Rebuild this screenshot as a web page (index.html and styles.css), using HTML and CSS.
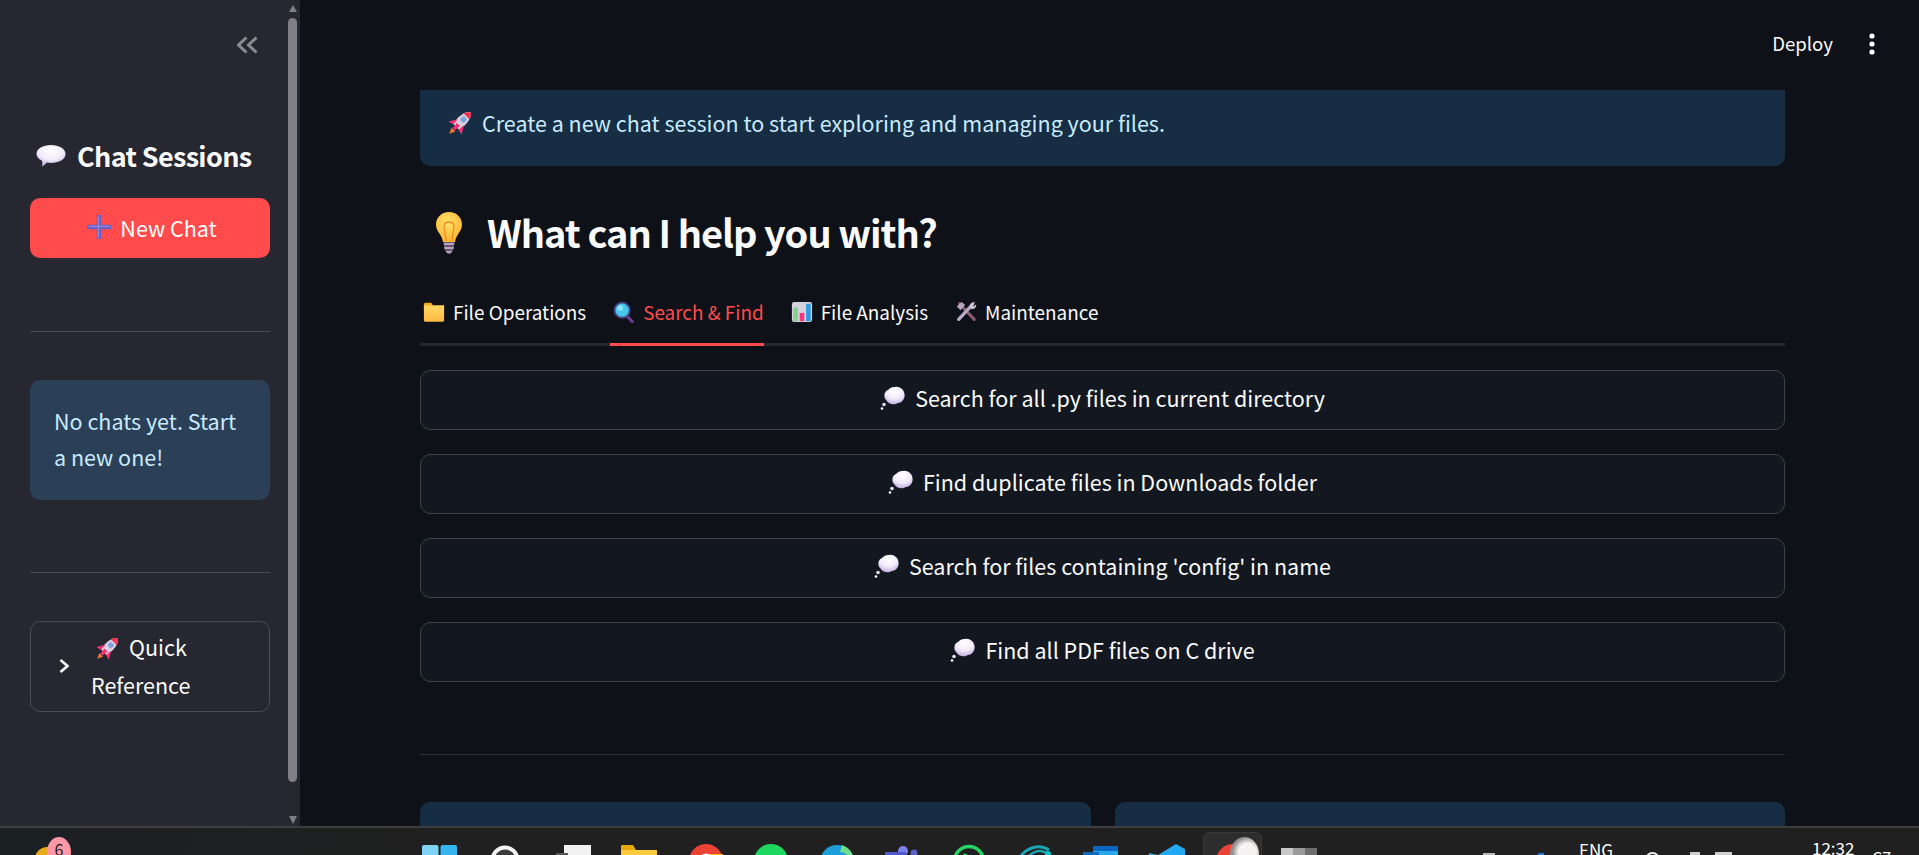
FILE: index.html
```html
<!DOCTYPE html>
<html lang="en">
<head>
  <meta charset="UTF-8" />
  <meta name="viewport" content="width=device-width, initial-scale=1.0"/>
  <title>Chat Sessions</title>
  <link rel="stylesheet" href="styles.css">
</head>
<body>
  <!-- shared emoji drawings -->
  <svg class="sprite" width="0" height="0" aria-hidden="true">
    <defs>
      <radialGradient id="cloud" cx="50%" cy="25%" r="80%">
        <stop offset="0" stop-color="#ffffff"/>
        <stop offset="0.55" stop-color="#f1ebf9"/>
        <stop offset="1" stop-color="#b9a4dc"/>
      </radialGradient>
      <radialGradient id="glass" cx="45%" cy="35%" r="70%">
        <stop offset="0" stop-color="#ffe36a"/>
        <stop offset="1" stop-color="#ffb02e"/>
      </radialGradient>
      <linearGradient id="folderBody" x1="0" y1="0" x2="0" y2="1">
        <stop offset="0" stop-color="#ffd766"/>
        <stop offset="1" stop-color="#ffb93e"/>
      </linearGradient>
      <symbol id="i-rocket" viewBox="0 0 24 24">
        <g transform="rotate(45 12 12)">
          <path d="M12 -2C16.500 1 17.500 8 16 17H8C6.500 8 7.500 1 12 -2Z" fill="#dcd0dc"/>
          <path d="M12 -2C13.800 -.6 15.200 1.200 16 3.400H8C8.800 1.200 10.200 -.6 12 -2Z" fill="#f8314f"/>
          <path d="M8 11L3.500 18.500L8.600 17.500ZM16 11L20.500 18.500L15.400 17.500ZM10 14H14L13.500 20H10.500Z" fill="#f92f77"/>
          <path d="M9.500 20.500H14.500L12 26Z" fill="#f0792e"/>
          <circle cx="12" cy="7.500" r="2.500" fill="#6ea6e8" stroke="#9aa6cf" stroke-width=".8"/>
        </g>
      </symbol>
      <symbol id="i-thought" viewBox="0 0 26 24">
        <path d="M15 1C19 0 24 3 24.500 8C25.500 12 22 17 18 17C14 19.500 8 18 6.500 14.500C3 12 4 5 8 4C10 1.500 13 .5 15 1Z" fill="url(#cloud)"/>
        <circle cx="4" cy="18.500" r="1.800" fill="#e8e0f4"/>
        <circle cx="2" cy="22.500" r="1.300" fill="#fff"/>
      </symbol>
      <symbol id="i-speech" viewBox="0 0 30 24">
        <path d="M15 1C23 1 29.500 4.600 29.500 10C29.500 15.400 23 19 15 19C13.500 19 12 18.900 10.600 18.600C9.500 20.400 7.500 22 6 22.400C6.400 20.800 6.400 18.600 6 16.800C2.800 15.200 .5 12.800 .5 10C.5 4.600 7 1 15 1Z" fill="url(#cloud)"/>
      </symbol>
      <symbol id="i-plus" viewBox="0 0 24 24">
        <path d="M12 1V23M1 12H23" stroke="#6a5fc4" stroke-width="4.400" stroke-linecap="round" fill="none"/>
        <path d="M11.400 2V22M2 11.400H22" stroke="#8f86e0" stroke-width="1.400" stroke-linecap="round" fill="none"/>
      </symbol>
      <symbol id="i-bulb" viewBox="0 0 28 44">
        <path d="M14 1C21.500 1 27 6.500 27 13.500C27 20.500 21 23.500 20 31H8C7 23.500 1 20.500 1 13.500C1 6.500 6.500 1 14 1Z" fill="url(#glass)"/>
        <path d="M11 30C10.500 22 9 19 9 15.500C9 12.500 11 11 14 11C17 11 19 12.500 19 15.500C19 19 17.500 22 17 30" fill="none" stroke="#f08a26" stroke-width="1.300"/>
        <path d="M8.500 31.500H19.500L19 34.500L9 34.500ZM9 35.500H19L18.500 38.500H9.500ZM10 39.500H18L15.500 42.500H12.500Z" fill="#b8a0c0"/>
      </symbol>
      <symbol id="i-folder" viewBox="0 0 24 24">
        <path d="M1 4C1 2.800 1.800 2 3 2H9L11 5H23V9H1Z" fill="#f6a821"/>
        <path d="M1 5H23V21C23 22 22.200 22.700 21.200 22.700H2.800C1.800 22.700 1 22 1 21Z" fill="url(#folderBody)"/>
      </symbol>
      <symbol id="i-search" viewBox="0 0 24 24">
        <path d="M14 15L21 22.500" stroke="#6a3d8f" stroke-width="3.400" stroke-linecap="round"/>
        <circle cx="10" cy="10" r="8.300" fill="#45c6ec" stroke="#4a3f7f" stroke-width="2"/>
        <circle cx="8" cy="7.500" r="3" fill="#8be2f7"/>
      </symbol>
      <symbol id="i-chart" viewBox="0 0 24 24">
        <rect x="1" y="1" width="22" height="22" rx="2.500" fill="#d4d2dc"/>
        <rect x="2.500" y="7" width="5" height="15" fill="#86d08f"/>
        <rect x="9.500" y="13" width="5" height="9" fill="#f8377f"/>
        <rect x="16.500" y="3" width="5" height="19" fill="#2f9ae6"/>
      </symbol>
      <symbol id="i-tools" viewBox="0 0 24 24">
        <path d="M5 3L21 20" stroke="#8a5a6a" stroke-width="3.400" stroke-linecap="round"/>
        <path d="M2 6L7 1L11 4L6 10Z" fill="#b7a6c4"/>
        <path d="M19 4L4 20" stroke="#b9aac8" stroke-width="3.600" stroke-linecap="round"/>
        <path d="M16 6C16 2.500 19 .500 22 1.500L19 4.500L20.500 6L23 3.500C23.800 7 20.500 9.500 17.500 8.500Z" fill="#cfc4da"/>
      </symbol>
    </defs>
  </svg>

  <div class="app">
    <div class="workspace">
      <aside class="sidebar">
        <div class="sidebar-content">
          <div class="collapse-row">
            <svg class="collapse-icon" viewBox="0 0 21 18"><path d="M9.500 1.500L1.500 9L9.500 16.500M19.500 1.500L11.500 9L19.500 16.500" fill="none" stroke="#8a8b90" stroke-width="3"/></svg>
          </div>
          <h3 class="sidebar-title"><svg class="emoji emoji-speech"><use href="#i-speech"/></svg>Chat Sessions</h3>
          <button class="btn-primary" type="button"><svg class="emoji emoji-plus"><use href="#i-plus"/></svg>New Chat</button>
          <hr class="side-rule rule-first">
          <div class="side-info">No chats yet. Start a new one!</div>
          <hr class="side-rule">
          <div class="expander">
            <svg class="chevron" viewBox="0 0 10 14"><path d="M1.500 1L8.500 7L1.500 13" fill="none" stroke="#fafafa" stroke-width="2.600"/></svg>
            <span class="expander-label"><svg class="emoji emoji-rocket-side"><use href="#i-rocket"/></svg>Quick Reference</span>
          </div>
        </div>
        <div class="side-scroll">
          <span class="arrow-up"></span>
          <span class="thumb"></span>
          <span class="arrow-down"></span>
        </div>
      </aside>

      <main class="main">
        <header class="topbar">
          <span class="deploy">Deploy</span>
          <svg class="dots" viewBox="0 0 6 22"><circle cx="3" cy="3" r="2.600"/><circle cx="3" cy="11" r="2.600"/><circle cx="3" cy="19" r="2.600"/></svg>
        </header>

        <div class="content">
          <div class="alert"><svg class="emoji emoji-rocket"><use href="#i-rocket"/></svg>Create a new chat session to start exploring and managing your files.</div>

          <h2 class="help-title"><svg class="emoji-bulb"><use href="#i-bulb"/></svg>What can I help you with?</h2>

          <div class="tabs">
            <div class="tab"><svg class="emoji"><use href="#i-folder"/></svg>File Operations</div>
            <div class="tab tab-active"><svg class="emoji"><use href="#i-search"/></svg>Search &amp; Find</div>
            <div class="tab"><svg class="emoji"><use href="#i-chart"/></svg>File Analysis</div>
            <div class="tab"><svg class="emoji"><use href="#i-tools"/></svg>Maintenance</div>
          </div>

          <div class="prompts">
            <button class="prompt" type="button"><svg class="emoji emoji-thought"><use href="#i-thought"/></svg>Search for all .py files in current directory</button>
            <button class="prompt" type="button"><svg class="emoji emoji-thought"><use href="#i-thought"/></svg>Find duplicate files in Downloads folder</button>
            <button class="prompt" type="button"><svg class="emoji emoji-thought"><use href="#i-thought"/></svg>Search for files containing 'config' in name</button>
            <button class="prompt" type="button"><svg class="emoji emoji-thought"><use href="#i-thought"/></svg>Find all PDF files on C drive</button>
          </div>

          <hr class="main-rule">

          <div class="stat-row">
            <div class="stat-card"></div>
            <div class="stat-card"></div>
          </div>
        </div>
      </main>
    </div>

    <footer class="taskbar">
      <div class="weather">
        <span class="sun"></span>
        <span class="badge">6</span>
      </div>
      <div class="task-icons">
        <svg class="task-icon" viewBox="0 0 35 35"><rect x="0" y="0" width="16.500" height="16.500" rx="2" fill="#7fd3f7"/><rect x="18.500" y="0" width="16.500" height="16.500" rx="2" fill="#36b4ee"/></svg>
        <svg class="task-icon" viewBox="0 0 35 35"><circle cx="17" cy="15" r="12.500" fill="#3a3a3a" stroke="#f4f4f4" stroke-width="4"/></svg>
        <svg class="task-icon" viewBox="0 0 35 35"><rect x="10" y="0" width="27" height="20" fill="#f2f2f2"/><rect x="2" y="8" width="12" height="4" fill="#555"/></svg>
        <svg class="task-icon" viewBox="0 0 35 35"><path d="M1 6V1.500C1 .500 1.500 0 2.500 0H13L16 5H37V30H1Z" fill="#e8a90f"/><rect x="1" y="5" width="36" height="25" fill="#fbcb3c"/></svg>
        <svg class="task-icon" viewBox="0 0 35 35"><circle cx="20" cy="16" r="17" fill="#ea4335"/><path d="M20 9H37V16H20Z" fill="#fbbc05"/><circle cx="20" cy="16" r="7.500" fill="#fff"/></svg>
        <svg class="task-icon" viewBox="0 0 35 35"><circle cx="19" cy="16" r="17" fill="#1ed760"/></svg>
        <svg class="task-icon" viewBox="0 0 35 35"><circle cx="19" cy="17" r="17" fill="#1c9fd8"/><path d="M24 0C32 3 36 9 36 17C32 11 28 8 22 7Z" fill="#6fe08a"/></svg>
        <svg class="task-icon" viewBox="0 0 35 35"><circle cx="19" cy="6" r="5" fill="#7b83eb"/><circle cx="30" cy="8" r="3.500" fill="#5b5fc7"/><rect x="1" y="7" width="21" height="20" fill="#5059c9"/></svg>
        <svg class="task-icon" viewBox="0 0 35 35"><circle cx="19" cy="16" r="14.500" fill="none" stroke="#25d366" stroke-width="3.500"/><circle cx="15" cy="11" r="2.500" fill="#25d366"/></svg>
        <svg class="task-icon" viewBox="0 0 35 35"><path d="M3 14C9 3 23 -2 33 5" fill="none" stroke="#1aa3b0" stroke-width="3"/><path d="M9 16C14 7 24 3 32 9" fill="none" stroke="#1aa3b0" stroke-width="2.500"/><circle cx="32" cy="9" r="3" fill="#12c0c9"/></svg>
        <svg class="task-icon" viewBox="0 0 35 35"><rect x="11" y="1" width="25" height="5" fill="#0a66c2"/><rect x="11" y="6" width="25" height="24" fill="#28a8ea"/><rect x="1" y="7" width="16" height="20" fill="#0f6cbd"/></svg>
        <svg class="task-icon" viewBox="0 0 35 35"><path d="M28 -1L37 4V30L28 35L10 15L1 20V8L10 10Z" fill="#23a9f2"/></svg>
        <div class="task-active">
          <span class="active-red"></span>
          <span class="active-white"></span>
        </div>
        <div class="task-last">
          <span class="last-a"></span><span class="last-b"></span><span class="last-c"></span>
        </div>
      </div>
      <div class="tray">
        <span class="tray-mark"></span>
        <span class="tray-dot"></span>
        <span class="tray-lang">ENG</span>
        <span class="tray-round"></span>
        <span class="tray-tick"></span>
        <span class="tray-tick tray-tick-wide"></span>
        <span class="tray-time">12:32</span>
        <span class="tray-bell">C7</span>
      </div>
    </footer>
  </div>
</body>
</html>
```

FILE: styles.css
```css
* {
  box-sizing: border-box;
}

html, body {
  margin: 0;
  height: 100%;
  overflow: hidden;
}

body {
  font-family: "Noto Sans CJK SC", "Noto Sans", sans-serif;
  background: #0e1117;
  color: #fafafa;
}

.sprite {
  position: absolute;
}

.app {
  height: 855px;
  display: flex;
  flex-direction: column;
}

.workspace {
  flex: 1;
  display: flex;
  min-height: 0;
}

/* Sidebar */
.sidebar {
  width: 300px;
  flex: none;
  background: #262730;
  display: flex;
}

.sidebar-content {
  width: 288px;
  padding: 36px 18px 0 30px;
}

.collapse-row {
  display: flex;
  justify-content: flex-end;
  padding-right: 12px;
}

.collapse-icon {
  width: 21px;
  height: 18px;
}

.sidebar-title {
  margin: 82px 0 0;
  height: 40px;
  padding: 0 0 2px 6px;
  display: flex;
  align-items: center;
  font-size: 27px;
  font-weight: 600;
  letter-spacing: -0.65px;
}

.emoji {
  width: 22px;
  height: 22px;
  flex: none;
}

.emoji-speech {
  width: 30px;
  height: 24px;
  margin: 2px 11px 0 0;
}

.btn-primary {
  width: 240px;
  height: 60px;
  margin-top: 22px;
  padding: 0 0 2px 4px;
  border: none;
  border-radius: 10px;
  background: #ff4b4b;
  color: #fff;
  font: inherit;
  font-size: 21.5px;
  display: flex;
  align-items: center;
  justify-content: center;
}

.emoji-plus {
  width: 24px;
  height: 24px;
  margin-right: 9px;
}

.side-rule {
  margin: 72px 0 48px;
  border: none;
  border-top: 1px solid #4a4b53;
}

.rule-first {
  margin-top: 73px;
}

.side-info {
  height: 120px;
  padding: 23px 24px;
  border-radius: 10px;
  background: #2b3f57;
  color: #c7ebff;
  font-size: 21.5px;
  line-height: 36px;
}

.expander {
  height: 91px;
  padding: 0 0 2px 28px;
  border: 1px solid #4a4b53;
  border-radius: 10px;
  display: flex;
  align-items: center;
}

.chevron {
  width: 10px;
  height: 14px;
  flex: none;
}

.expander-label {
  width: 130px;
  margin-left: 22px;
  font-size: 21.5px;
  line-height: 38px;
}

.emoji-rocket-side {
  width: 25px;
  height: 25px;
  margin: 0 9px 0 4px;
  vertical-align: -5px;
}

.side-scroll {
  width: 9px;
  margin-right: 3px;
  padding-top: 5px;
  display: flex;
  flex-direction: column;
  align-items: center;
}

.arrow-up {
  border: 4.5px solid transparent;
  border-top: none;
  border-bottom: 7px solid #7f7f85;
}

.thumb {
  width: 9px;
  height: 764px;
  margin-top: 6px;
  border-radius: 5px;
  background: #7f7f85;
}

.arrow-down {
  margin-top: 34px;
  border: 4.5px solid transparent;
  border-bottom: none;
  border-top: 8px solid #7f7f85;
}

/* Main area */
.main {
  flex: 1;
  min-width: 0;
  display: flex;
  flex-direction: column;
  overflow: hidden;
}

.topbar {
  height: 90px;
  flex: none;
  padding: 0 44px 2px 0;
  display: flex;
  align-items: center;
  justify-content: flex-end;
}

.deploy {
  font-size: 18.6px;
  margin: 0 36px 4px 0;
}

.dots {
  width: 6px;
  height: 22px;
  fill: #fafafa;
}

.content {
  padding: 0 134px 0 120px;
}

.alert {
  height: 76px;
  padding: 0 0 11px 27px;
  border-radius: 0 0 10px 10px;
  background: #172d43;
  color: #c7ebff;
  font-size: 21.5px;
  display: flex;
  align-items: center;
}

.emoji-rocket {
  width: 26px;
  height: 26px;
  margin-right: 9px;
}

.help-title {
  margin: 40px 0 0;
  height: 54px;
  padding: 0 0 3px 14px;
  display: flex;
  align-items: center;
  font-size: 38px;
  font-weight: 600;
  letter-spacing: -1px;
}

.emoji-bulb {
  width: 30px;
  height: 44px;
  margin: 3px 23px 0 0;
}

.tabs {
  margin-top: 32px;
  height: 54px;
  display: flex;
  gap: 24px;
  border-bottom: 3px solid #262730;
}

.tab {
  height: 54px;
  padding: 0 0 15px 3px;
  display: flex;
  align-items: center;
  gap: 8px;
  font-size: 18.9px;
}

.tab-active {
  color: #ff4b4b;
  border-bottom: 3px solid #ff4b4b;
  padding-bottom: 12px;
}

.prompts {
  margin-top: 24px;
  display: flex;
  flex-direction: column;
  gap: 24px;
}

.prompt {
  height: 60px;
  padding: 0 0 5px;
  border: 1px solid #3f4147;
  border-radius: 10px;
  background: #13171f;
  color: #fafafa;
  font: inherit;
  font-size: 21.5px;
  display: flex;
  align-items: center;
  justify-content: center;
}

.emoji-thought {
  width: 26px;
  height: 24px;
  margin-right: 9px;
}

.main-rule {
  margin: 72px 0 47px;
  border: none;
  border-top: 1px solid #31333a;
}

.stat-row {
  display: flex;
  gap: 24px;
}

.stat-card {
  flex: 1;
  height: 60px;
  border-radius: 10px;
  background: #172d43;
}

/* Taskbar, cut off by the bottom of the window */
.taskbar {
  height: 29px;
  flex: none;
  border-top: 2px solid #3e3e3e;
  background: #202020;
  display: flex;
  overflow: hidden;
}

.weather {
  width: 406.5px;
  flex: none;
  background: linear-gradient(90deg, #1b2023, #202020);
  position: relative;
}

.sun {
  position: absolute;
  left: 35px;
  top: 19px;
  width: 24px;
  height: 24px;
  border-radius: 50%;
  background: #e9ab1b;
}

.badge {
  position: absolute;
  left: 47px;
  top: 9px;
  width: 24px;
  height: 30px;
  border-radius: 50%;
  background: #ff97a8;
  color: #1b1b1b;
  font-size: 16px;
  line-height: 24px;
  text-align: center;
}

.task-icons {
  width: 924px;
  flex: none;
  display: flex;
  padding-top: 17px;
}

.task-icon {
  width: 35px;
  height: 35px;
  margin: 0 15.5px;
  flex: none;
  overflow: visible;
}

.task-active {
  width: 59px;
  height: 40px;
  margin: -13px 0 0 4.5px;
  border-radius: 6px;
  background: #2d2d2d;
  border: 1px solid #383838;
  position: relative;
  flex: none;
}

.active-red {
  position: absolute;
  left: 12px;
  top: 11px;
  width: 34px;
  height: 34px;
  border-radius: 50%;
  background: #ea4335;
}

.active-white {
  position: absolute;
  left: 26px;
  top: 4px;
  width: 29px;
  height: 34px;
  border-radius: 50%;
  background: radial-gradient(circle at 60% 45%, #f6f4f2 0 35%, #8c8a88 60%, #dcdad8 100%);
}

.task-last {
  display: flex;
  margin: 3px 0 0 19px;
}

.task-last span {
  width: 12px;
  height: 8px;
}

.last-a { background: #c8c8c8; }
.last-b { background: #9a9a9a; }
.last-c { background: #6e6e6e; }

.tray {
  flex: 1;
  display: flex;
  align-items: flex-start;
  color: #fff;
}

.tray span {
  flex: none;
}

.tray-mark {
  width: 12px;
  height: 3px;
  margin: 25px 0 0 152.5px;
  background: #b8b8b8;
}

.tray-dot {
  width: 6px;
  height: 3px;
  margin: 25px 0 0 43px;
  background: #1f78c8;
}

.tray-lang {
  width: 34px;
  margin: 12px 0 0 35px;
  font-size: 17px;
  line-height: 20px;
}

.tray-round {
  width: 15px;
  height: 15px;
  margin: 24px 0 0 32px;
  border-radius: 50%;
  border: 2px solid #eee;
}

.tray-tick {
  width: 10px;
  height: 3px;
  margin: 24px 0 0 30px;
  background: #cfcfcf;
}

.tray-tick-wide {
  width: 17px;
  margin-left: 15px;
}

.tray-time {
  width: 43px;
  margin: 10px 0 0 80px;
  font-size: 17px;
  line-height: 20px;
}

.tray-bell {
  margin: 19px 0 0 17px;
  font-size: 16px;
  line-height: 20px;
}
```
